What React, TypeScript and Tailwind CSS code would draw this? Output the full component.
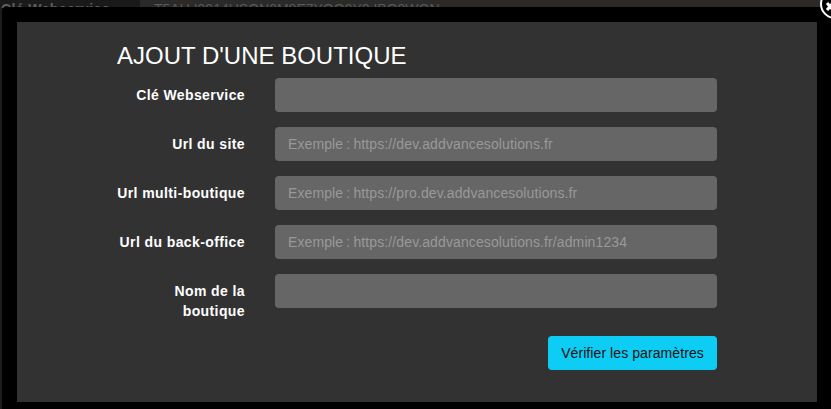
import React from "react";

type field = {
  label: string;
  placeholder: string;
};

const fields: field[] = [
  { label: "Clé Webservice", placeholder: "" },
  { label: "Url du site", placeholder: "Exemple : https://dev.addvancesolutions.fr" },
  { label: "Url multi-boutique", placeholder: "Exemple : https://pro.dev.addvancesolutions.fr" },
  { label: "Url du back-office", placeholder: "Exemple : https://dev.addvancesolutions.fr/admin1234" },
  { label: "Nom de la boutique", placeholder: "" },
];

const App = () => {
  return (
    <div className="relative h-[409px] w-[831px] overflow-hidden bg-[#1c1c1c] font-['Liberation_Sans',Arial,sans-serif]">
      {/* page behind the modal, only the top strip shows */}
      <div className="flex h-[8px] items-start overflow-hidden">
        <div className="h-[8px] w-[140px] shrink-0 bg-[#1a1a1a] pt-[1px] pl-[1px] text-[14px] leading-[16px] font-bold tracking-[0.4px] whitespace-nowrap text-[#5f5f5f]">
          Clé Webservice
        </div>
        <div className="h-[8px] flex-1 bg-[#2b2a29] pt-[1px] pl-[14px] text-[14px] leading-[16px] whitespace-nowrap text-[#585858]">
          T5AU I9914USON0M8E7YQO9Y0 IBO9WQN
        </div>
      </div>

      <div className="absolute top-[7px] left-[2px] h-[402px] w-[829px] rounded-tl-[4px] bg-black pt-[15px] pl-[15px]">
        <div className="h-[380px] w-[800px] bg-[#323232] pt-[20px] pl-[100px]">
          <h1 className="text-[24px] leading-[27px] text-white">AJOUT D'UNE BOUTIQUE</h1>
          <form className="mt-[9px] flex w-[600px] flex-col gap-[15px]">
            {fields.map((item) => (
              <div key={item.label} className="flex items-start">
                <label className="w-[128px] pt-[7px] text-right text-[14px] leading-[20px] font-bold tracking-[0.4px] text-white">
                  {item.label}
                </label>
                <input
                  type="text"
                  placeholder={item.placeholder}
                  className="ml-[30px] h-[34px] w-[442px] rounded-[4px] bg-[#666666] px-[13px] text-[14px] tracking-[0.11px] [word-spacing:-0.9px] outline-none placeholder:text-[#999999]"
                />
              </div>
            ))}
            <div className="flex w-[600px] justify-end">
              <button
                type="button"
                className="h-[34px] w-[169px] rounded-[4px] bg-[#0dcdf4] text-[14px] tracking-[0.08px] text-[#111111]"
              >
                Vérifier les paramètres
              </button>
            </div>
          </form>
        </div>
      </div>

      {/* close button, mostly cut off by the window edge */}
      <div className="absolute top-[-11px] left-[820px] flex h-[30px] w-[30px] items-center justify-center rounded-full border-[2px] border-white bg-black">
        <svg width="30" height="30" viewBox="0 0 30 30" className="shrink-0">
          <path d="M7 14 L13 21 M13 14 L7 21" stroke="white" strokeWidth="3" fill="none" />
        </svg>
      </div>
    </div>
  );
};

export default App;
